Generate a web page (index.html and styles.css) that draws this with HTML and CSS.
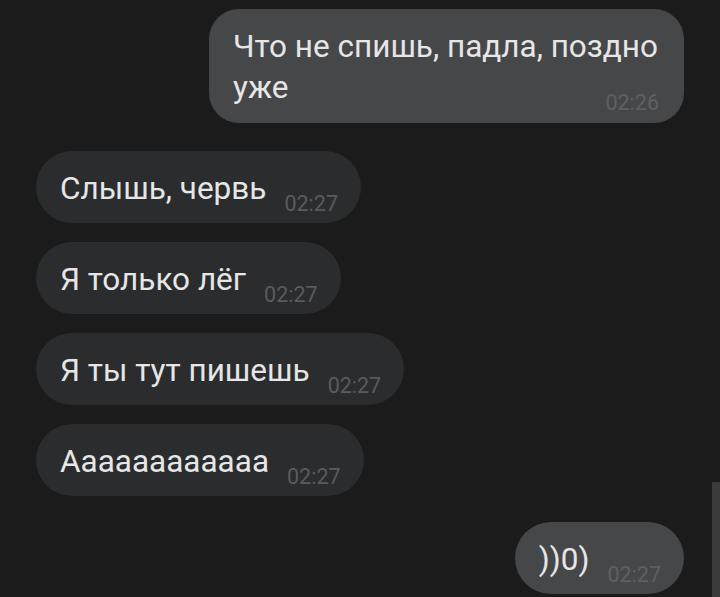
FILE: index.html
```html
<!DOCTYPE html>
<html lang="ru">
<head>
    <meta charset="UTF-8">
    <meta name="viewport" content="width=device-width, initial-scale=1.0">
    <title>Чат</title>
    <link rel="stylesheet" href="styles.css">
</head>
<body>
    <div class="chat">
        <div class="msg out">
            <div class="bubble wide">Что не спишь, падла, поздно уже<span class="time">02:26</span></div>
        </div>
        <div class="msg in first">
            <div class="bubble">Слышь, червь<span class="time">02:27</span></div>
        </div>
        <div class="msg in">
            <div class="bubble">Я только лёг<span class="time">02:27</span></div>
        </div>
        <div class="msg in">
            <div class="bubble">Я ты тут пишешь<span class="time">02:27</span></div>
        </div>
        <div class="msg in">
            <div class="bubble">Аааааааааааа<span class="time">02:27</span></div>
        </div>
        <div class="msg out last">
            <div class="bubble">))0)<span class="time">02:27</span></div>
        </div>
    </div>
    <div class="scrollbar"></div>
</body>
</html>
```

FILE: styles.css
```css
body {
    margin: 0;
    background-color: #1b1b1b;
    font-family: Roboto, "Noto Sans", sans-serif;
    color: #e6e6e7;
    height: 597px;
    overflow: hidden;
    position: relative;
}
.chat {
    display: flex;
    flex-direction: column;
    gap: 19px;
    padding: 9px 36px 0;
}
.msg {
    display: flex;
}
.msg.in {
    justify-content: flex-start;
}
.msg.out {
    justify-content: flex-end;
}
.msg.first {
    margin-top: 9px;
}
.msg.last {
    margin-top: 7px;
}
.bubble {
    font-size: 31.5px;
    line-height: 41px;
    padding: 17px 23px 14px 24px;
    border-radius: 36px;
    background-color: #2b2c2e;
}
.out .bubble {
    background-color: #464749;
}
.bubble.wide {
    max-width: 426px;
    padding-right: 25px;
    padding-bottom: 15px;
    border-radius: 30px;
}
.time {
    float: right;
    font-size: 21.5px;
    line-height: 21px;
    margin: 25px 0 -10px 18px;
    color: #5a5b5d;
}
.out .time {
    color: #5f6063;
}
.scrollbar {
    position: absolute;
    right: 0;
    top: 482px;
    width: 8px;
    height: 115px;
    background-color: #3b3b3b;
}
```
